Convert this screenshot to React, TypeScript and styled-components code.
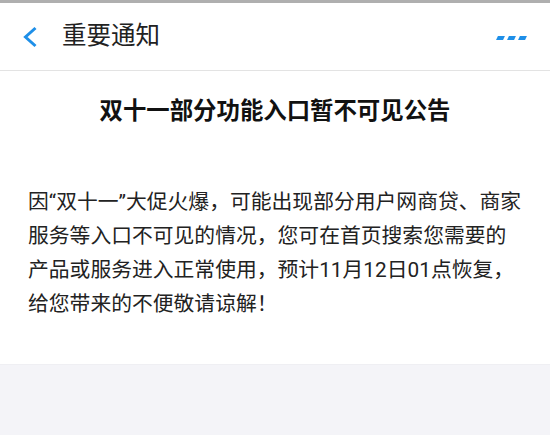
import styled, { createGlobalStyle } from "styled-components"

const GlobalStyle = createGlobalStyle`
  html, body {
    margin: 0;
    padding: 0;
    background: #f4f4f8;
  }
  body {
    font-family: Roboto, "Noto Sans CJK SC", sans-serif;
  }
`

const lines = [
  "因“双十一”大促火爆，可能出现部分用户网商贷、商家",
  "服务等入口不可见的情况，您可在首页搜索您需要的",
  "产品或服务进入正常使用，预计11月12日01点恢复，",
  "给您带来的不便敬请谅解！",
]

const App = () => {
  return (
    <Page>
      <GlobalStyle />
      <StatusStrip />
      <Header>
        <BackButton>
          <svg width="16" height="22" viewBox="0 0 16 22">
            <path d="M13.5 2 L3.5 11 L13.5 20" fill="none" stroke="#1e8fe8" strokeWidth="3" strokeLinejoin="miter" />
          </svg>
        </BackButton>
        <HeaderTitle>重要通知</HeaderTitle>
        <MoreButton>
          <Dash />
          <Dash />
          <Dash />
        </MoreButton>
      </Header>
      <Notice>
        <NoticeTitle>双十一部分功能入口暂不可见公告</NoticeTitle>
        <NoticeBody>
          {lines.map((l) => (
            <Line key={l}>{l}</Line>
          ))}
        </NoticeBody>
      </Notice>
    </Page>
  )
}

export default App

const Page = styled.div`
  width: 550px;
  min-height: 435px;
  background: #f4f4f8;
`

const StatusStrip = styled.div`
  height: 3px;
  background: #afafaf;
`

const Header = styled.div`
  height: 68px;
  background: #fff;
  border-bottom: 1px solid #e3e3e3;
  box-sizing: border-box;
  display: flex;
  align-items: center;
  padding: 0 22px 0 22px;
`

const BackButton = styled.div`
  width: 16px;
  height: 22px;
  display: flex;
  margin-top: 1px;
`

const HeaderTitle = styled.div`
  margin-left: 24px;
  font-size: 24.5px;
  color: #222;
  flex: 1;
  line-height: 1;
`

const MoreButton = styled.div`
  display: flex;
  gap: 4px;
  margin-right: 2px;
  margin-top: 2px;
`

const Dash = styled.span`
  width: 7px;
  height: 4px;
  background: #1e8fe8;
  transform: skewX(-25deg);
`

const Notice = styled.div`
  background: #fff;
  border-bottom: 1px solid #efeff3;
  padding: 24px 0 43px;
`

const NoticeTitle = styled.div`
  text-align: center;
  font-size: 23.4px;
  font-weight: 700;
  color: #111;
  line-height: 32px;
`

const NoticeBody = styled.div`
  margin-top: 58px;
  padding: 0 28px;
  font-size: 20.8px;
  color: #222;
`

const Line = styled.div`
  line-height: 34px;
  white-space: nowrap;
`
